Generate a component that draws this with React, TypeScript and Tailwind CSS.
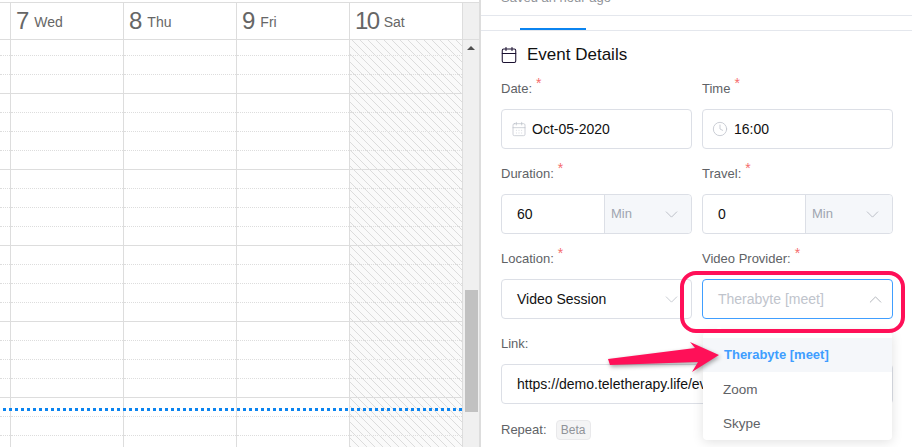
import { Calendar, CalendarDays, ChevronDown, ChevronUp, Clock } from "lucide-react";

const slots = Array.from({ length: 21 }, (_, i) => i);

function Slots() {
  return (
    <>
      <div className="h-[16px] border-b border-dotted border-[#dddddd]" />
      {slots.map((i) => (
        <div
          key={i}
          className={
            i % 4 === 1
              ? "h-[19px] border-b border-[#dddddd]"
              : "h-[19px] border-b border-dotted border-[#dddddd]"
          }
        />
      ))}
    </>
  );
}

const days = [
  { n: "7", d: "Wed" },
  { n: "8", d: "Thu" },
  { n: "9", d: "Fri" },
  { n: "10", d: "Sat" },
];

function Label({ text, req = true }: { text: string; req?: boolean }) {
  return (
    <div className="flex h-5 mb-[11px] items-center pt-[2px] text-[13px] leading-5 text-[#606266]">
      <span>{text}</span>
      {req && <span className="ml-[4px] -mt-[12px] text-sm leading-3 text-[#f56c6c]">*</span>}
    </div>
  );
}

function Box({
  children,
  className = "",
  border = "border-[#dcdfe6]",
}: {
  children?: React.ReactNode;
  className?: string;
  border?: string;
}) {
  return (
    <div className={"flex h-10 items-center rounded border bg-white text-sm text-[#111111] " + border + " " + className}>
      {children}
    </div>
  );
}

function Unit({ value }: { value: string }) {
  return (
    <div>
      <Box>
        <div className="flex-1 pl-[15px]">{value}</div>
        <div className="flex h-full w-[87px] items-center justify-between rounded-r border-l border-[#dcdfe6] bg-[#f5f7fa] pl-[6px] pr-[9px] text-[13px] text-[#a0a5b0]">
          <span>Min</span>
          <ChevronDown size={21} strokeWidth={1} className="text-[#b4b8c0]" />
        </div>
      </Box>
    </div>
  );
}

export default function App() {
  return (
    <div className="relative flex h-[447px] w-[912px] overflow-hidden bg-white [font-family:'Liberation_Sans',Arial,sans-serif]">
      {/* calendar */}
      <div className="relative flex h-full w-[481px] shrink-0 flex-col border-r-2 border-[#dddddd] pt-[2px]">
        <div className="flex h-[38px] shrink-0 border-y border-[#dddddd]">
          <div className="w-[11px] border-r border-[#dddddd]" />
          {days.map((x) => (
            <div key={x.d} className="flex w-[113px] items-center gap-[5px] border-r border-[#dddddd] pb-[1px] pl-[5px] text-[#666666]">
              <span className={x.d === "Sat" ? "text-2xl leading-none tracking-[-1.5px]" : "text-2xl leading-none"}>{x.n}</span>
              <span className="mt-[2px] text-sm leading-none">{x.d}</span>
            </div>
          ))}
          <div className="flex-1 bg-[#f0f0f0]" />
        </div>
        <div className="relative flex min-h-0 flex-1 overflow-hidden">
          <div className="w-[11px] border-r border-[#dddddd]">
            <Slots />
          </div>
          {days.map((x) => (
            <div
              key={x.d}
              className={
                x.d === "Sat"
                  ? "w-[113px] border-r border-[#dddddd] bg-[#fafafa] bg-[repeating-linear-gradient(45deg,#dcdcdc_0,#dcdcdc_1px,#fafafa_1px,#fafafa_5.66px)]"
                  : "w-[113px] border-r border-[#dddddd]"
              }
            >
              <Slots />
            </div>
          ))}
          <div className="flex flex-1 flex-col items-center justify-between bg-[#f0f0f0] pb-[35px] pt-[6px]">
            <div className="h-0 w-0 border-x-[4px] border-b-[4px] border-x-transparent border-b-[#505050]" />
            <div className="h-[122px] w-[13px] bg-[#c1c1c1]" />
          </div>
          <div className="absolute left-[3px] top-[368px] h-[3px] w-[460px] bg-[repeating-linear-gradient(90deg,#0b84f0_0,#0b84f0_3px,transparent_3px,transparent_6px)]" />
        </div>
      </div>

      {/* details panel */}
      <div className="flex min-w-0 flex-1 flex-col">
        <div className="flex h-[16px] items-end overflow-hidden border-b border-[#e4e7ed] pb-[6px] pl-5 text-[13px] leading-5 text-[#909399]">
          <span className="block h-5 shrink-0 -translate-y-[1px]">Saved an hour ago</span>
        </div>
        <div className="flex h-[15px] items-end border-b border-[#e4e7ed] pl-[39px]">
          <div className="h-[2px] w-[66px] bg-[#0b84f0]" />
        </div>
        <div className="flex h-[47px] items-center gap-[9px] pl-[19px] text-[17px] text-[#111111]">
          <Calendar size={18} strokeWidth={1.4} className="text-[#1a1030]" />
          <span>Event Details</span>
        </div>
        <div className="ml-5 grid w-[392px] grid-cols-2 gap-x-[10px] gap-y-[14px]">
          <div>
            <Label text="Date:" />
            <Box>
              <CalendarDays size={16} strokeWidth={1} className="ml-[9px] mr-[5px] text-[#b8bcc6]" />
              Oct-05-2020
            </Box>
          </div>
          <div>
            <Label text="Time" />
            <Box>
              <Clock size={16} strokeWidth={1.25} className="ml-[9px] mr-[6px] text-[#c0c4cc]" />
              16:00
            </Box>
          </div>
          <div>
            <Label text="Duration:" />
            <Unit value="60" />
          </div>
          <div>
            <Label text="Travel:" />
            <Unit value="0" />
          </div>
          <div>
            <Label text="Location:" />
            <Box className="justify-between pl-[15px] pr-[9px]">
              <span>Video Session</span>
              <ChevronDown size={21} strokeWidth={1} className="text-[#c0c4cc]" />
            </Box>
          </div>
          <div>
            <Label text="Video Provider:" />
            <div className="relative">
              <Box border="border-[#409eff]" className="justify-between pl-[15px] pr-[6px]">
                <span className="text-[#c0c4cc]">Therabyte [meet]</span>
                <ChevronUp size={21} strokeWidth={1} className="text-[#a8abb2]" />
              </Box>
              <div className="absolute left-px top-[53px] z-10 w-[189px] rounded bg-white pt-[6px] shadow-[0_2px_12px_rgba(0,0,0,0.12)]">
                <div className="absolute -top-[4px] left-[12px] h-2 w-2 rotate-45 bg-white" />
                <div className="relative flex h-[34px] items-center bg-[#f5f7fa] pl-[21px] text-[13px] font-bold text-[#409eff]">Therabyte [meet]</div>
                <div className="flex h-[34px] items-center pl-5 pt-[2px] text-[13.5px] text-[#606266]">Zoom</div>
                <div className="flex h-[34px] items-center pl-5 pt-[2px] text-[13.5px] text-[#606266]">Skype</div>
              </div>
              <div className="absolute -left-[22px] -right-3 -top-2 -bottom-[14px] z-20 rounded-2xl border-4 border-[#ff1058]" />
            </div>
          </div>
          <div className="col-span-2">
            <Label text="Link:" req={false} />
            <Box className="overflow-hidden whitespace-nowrap pl-[15px]">https://demo.teletherapy.life/ev</Box>
          </div>
          <div className="col-span-2 flex h-6 items-center gap-[9px] text-[13px] text-[#606266]">
            <span>Repeat:</span>
            <span className="flex h-5 w-[35px] items-center justify-center rounded border border-[#e9e9eb] bg-[#f4f4f5] text-xs text-[#909399]">Beta</span>
          </div>
        </div>
      </div>

      {/* annotation arrow */}
      <svg className="absolute left-[600px] top-[335px] z-30 drop-shadow-[1px_2px_2px_rgba(0,0,0,0.35)]" width="125" height="42" viewBox="0 0 125 42">
        <polygon points="8,24 95,13 90,7 119,20 92,37 98,27 10,30" fill="#ff1058" />
      </svg>
    </div>
  );
}
